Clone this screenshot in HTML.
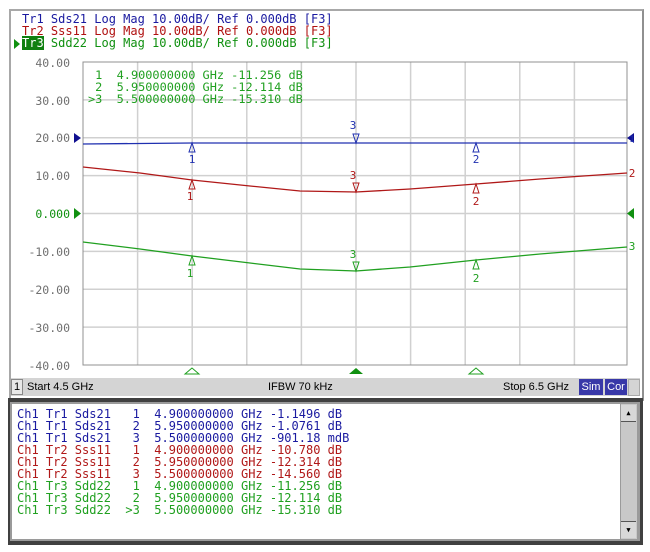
<!DOCTYPE html>
<html><head><meta charset="utf-8"><style>
body{margin:0;width:650px;height:552px;background:#fff;position:relative;overflow:hidden;font-family:"DejaVu Sans Mono","Liberation Mono",monospace}
.abs{position:absolute}
.mono{font-family:"DejaVu Sans Mono","Liberation Mono",monospace;font-size:12px;line-height:12px;white-space:pre}
.sans{font-family:"Liberation Sans",sans-serif;font-size:11px}
</style></head><body>
<div class="abs" style="left:9px;top:9px;width:631px;height:388px;border:2px solid #a8a8a8;border-right-color:#909090;background:#fff"></div>
<div class="abs mono" style="left:22px;top:13px;color:#1a1aa0">Tr1 Sds21 Log Mag 10.00dB/ Ref 0.000dB [F3]</div>
<div class="abs mono" style="left:22px;top:25px;color:#b01010">Tr2 Sss11 Log Mag 10.00dB/ Ref 0.000dB [F3]</div>
<div class="abs mono" style="left:22px;top:37px;color:#109010"><span style="background:#108010;color:#fff">Tr3</span> Sdd22 Log Mag 10.00dB/ Ref 0.000dB [F3]</div>
<svg class="abs" style="left:0;top:0" width="650" height="400">
<polygon points="14,39 20,44 14,49" fill="#109010"/>
<g stroke="#d0d0d0" stroke-width="1.5">
<line x1="137.6" y1="62" x2="137.6" y2="365"/><line x1="192.2" y1="62" x2="192.2" y2="365"/><line x1="246.8" y1="62" x2="246.8" y2="365"/><line x1="301.4" y1="62" x2="301.4" y2="365"/><line x1="356" y1="62" x2="356" y2="365"/><line x1="410.6" y1="62" x2="410.6" y2="365"/><line x1="465.2" y1="62" x2="465.2" y2="365"/><line x1="519.8" y1="62" x2="519.8" y2="365"/><line x1="574.4" y1="62" x2="574.4" y2="365"/>
<line x1="83" y1="99.9" x2="627" y2="99.9"/><line x1="83" y1="137.8" x2="627" y2="137.8"/><line x1="83" y1="175.6" x2="627" y2="175.6"/><line x1="83" y1="213.5" x2="627" y2="213.5"/><line x1="83" y1="251.4" x2="627" y2="251.4"/><line x1="83" y1="289.2" x2="627" y2="289.2"/><line x1="83" y1="327.1" x2="627" y2="327.1"/>
</g>
<rect x="83" y="62" width="544" height="303" fill="none" stroke="#909090" stroke-width="1"/>
<g font-family="DejaVu Sans Mono,Liberation Mono,monospace" font-size="11.5" fill="#707070" text-anchor="end">
<text x="70" y="67">40.00</text><text x="70" y="105">30.00</text><text x="70" y="142">20.00</text><text x="70" y="180">10.00</text><text x="70" y="218" fill="#109010">0.000</text><text x="70" y="256">-10.00</text><text x="70" y="294">-20.00</text><text x="70" y="332">-30.00</text><text x="70" y="370">-40.00</text>
</g>
<polygon points="74,133 81,138 74,143" fill="#101090"/>
<polygon points="74,208 81,213.5 74,219" fill="#109010"/>
<polygon points="634,133 627,138 634,143" fill="#101090"/>
<polygon points="634,208 627,213.5 634,219" fill="#109010"/>
<polyline fill="none" stroke="#2030b0" stroke-width="1.3" points="83,144 192,143 320,143 356,143 390,143 540,143 627,143"/>
<polyline fill="none" stroke="#b01818" stroke-width="1.3" points="83,167 140,173 192,180 250,186 300,191 356,192 410,189 476,184 540,179 627,173"/>
<polyline fill="none" stroke="#20a020" stroke-width="1.3" points="83,242 140,249 192,256 250,263 300,269 356,271 410,267 476,260 540,254 627,247"/>
<g font-family="DejaVu Sans Mono,monospace" font-size="11" text-anchor="middle">
<g fill="none" stroke="#2030b0"><path d="M192,143 l-3,9 h6 z"/><path d="M476,143 l-3,9 h6 z"/><path d="M356,143 l-3,-9 h6 z"/></g>
<text x="192" y="163" fill="#2030b0">1</text><text x="476" y="163" fill="#2030b0">2</text><text x="353" y="129" fill="#2030b0">3</text>
<g fill="none" stroke="#b01818"><path d="M192,180 l-3,9 h6 z"/><path d="M476,184 l-3,9 h6 z"/><path d="M356,192 l-3,-9 h6 z"/></g>
<text x="190" y="200" fill="#b01818">1</text><text x="476" y="205" fill="#b01818">2</text><text x="353" y="179" fill="#b01818">3</text>
<g fill="none" stroke="#20a020"><path d="M192,256 l-3,9 h6 z"/><path d="M476,260 l-3,9 h6 z"/><path d="M356,271 l-3,-9 h6 z"/></g>
<text x="190" y="277" fill="#20a020">1</text><text x="476" y="282" fill="#20a020">2</text><text x="353" y="258" fill="#20a020">3</text>
<text x="632" y="177" fill="#b01818">2</text><text x="632" y="250" fill="#20a020">3</text>
<text x="632" y="142" fill="#2030b0" font-size="9">1</text>
</g>
<path d="M192,368 l-7,6 h14 z" fill="none" stroke="#20a020"/>
<path d="M356,368 l-7,6 h14 z" fill="#109010"/>
<path d="M476,368 l-7,6 h14 z" fill="none" stroke="#20a020"/>
</svg>
<div class="abs mono" style="left:88px;top:69px;color:#20a020;font-size:11.9px;line-height:12px"> 1  4.900000000 GHz -11.256 dB
 2  5.950000000 GHz -12.114 dB
&gt;3  5.500000000 GHz -15.310 dB</div>
<div class="abs" style="left:11px;top:378px;width:629px;height:18px;background:#d4d4d4"></div>
<div class="abs sans" style="left:11px;top:379px;width:10px;height:14px;border:1px solid #888;background:#e8e8e8;text-align:center;line-height:14px">1</div>
<div class="abs sans" style="left:27px;top:381px">Start 4.5 GHz</div>
<div class="abs sans" style="left:268px;top:381px">IFBW 70 kHz</div>
<div class="abs sans" style="left:503px;top:381px">Stop 6.5 GHz</div>
<div class="abs sans" style="left:579px;top:379px;width:24px;height:16px;background:#3838a8;color:#fff;text-align:center;line-height:16px">Sim</div>
<div class="abs sans" style="left:605px;top:379px;width:22px;height:16px;background:#3838a8;color:#fff;text-align:center;line-height:16px">Cor</div>
<div class="abs" style="left:628px;top:379px;width:10px;height:15px;border:1px solid #aaa"></div>
<div class="abs" style="left:8px;top:398px;width:635px;height:147px;background:#404040"></div>
<div class="abs" style="left:10px;top:402px;width:630px;height:139px;background:#9a9a9a"></div>
<div class="abs" style="left:12px;top:404px;width:608px;height:135px;background:#fff"></div>
<div class="abs" style="left:621px;top:404px;width:16px;height:135px;background:#c8c8c8"></div>
<div class="abs" style="left:621px;top:405px;width:15px;height:16px;background:#d8d8d8;border-bottom:1px solid #555;font-size:7px;text-align:center;line-height:16px">▲</div>
<div class="abs" style="left:621px;top:521px;width:15px;height:16px;background:#d8d8d8;border-top:1px solid #555;font-size:7px;text-align:center;line-height:16px">▼</div>
<div class="abs mono" style="left:17px;top:408px;line-height:12px;font-size:12px"><span style="color:#1a1aa0">Ch1 Tr1 Sds21   1  4.900000000 GHz -1.1496 dB
Ch1 Tr1 Sds21   2  5.950000000 GHz -1.0761 dB
Ch1 Tr1 Sds21   3  5.500000000 GHz -901.18 mdB</span>
<span style="color:#b01818">Ch1 Tr2 Sss11   1  4.900000000 GHz -10.780 dB
Ch1 Tr2 Sss11   2  5.950000000 GHz -12.314 dB
Ch1 Tr2 Sss11   3  5.500000000 GHz -14.560 dB</span>
<span style="color:#20a020">Ch1 Tr3 Sdd22   1  4.900000000 GHz -11.256 dB
Ch1 Tr3 Sdd22   2  5.950000000 GHz -12.114 dB
Ch1 Tr3 Sdd22  &gt;3  5.500000000 GHz -15.310 dB</span></div>
</body></html>
